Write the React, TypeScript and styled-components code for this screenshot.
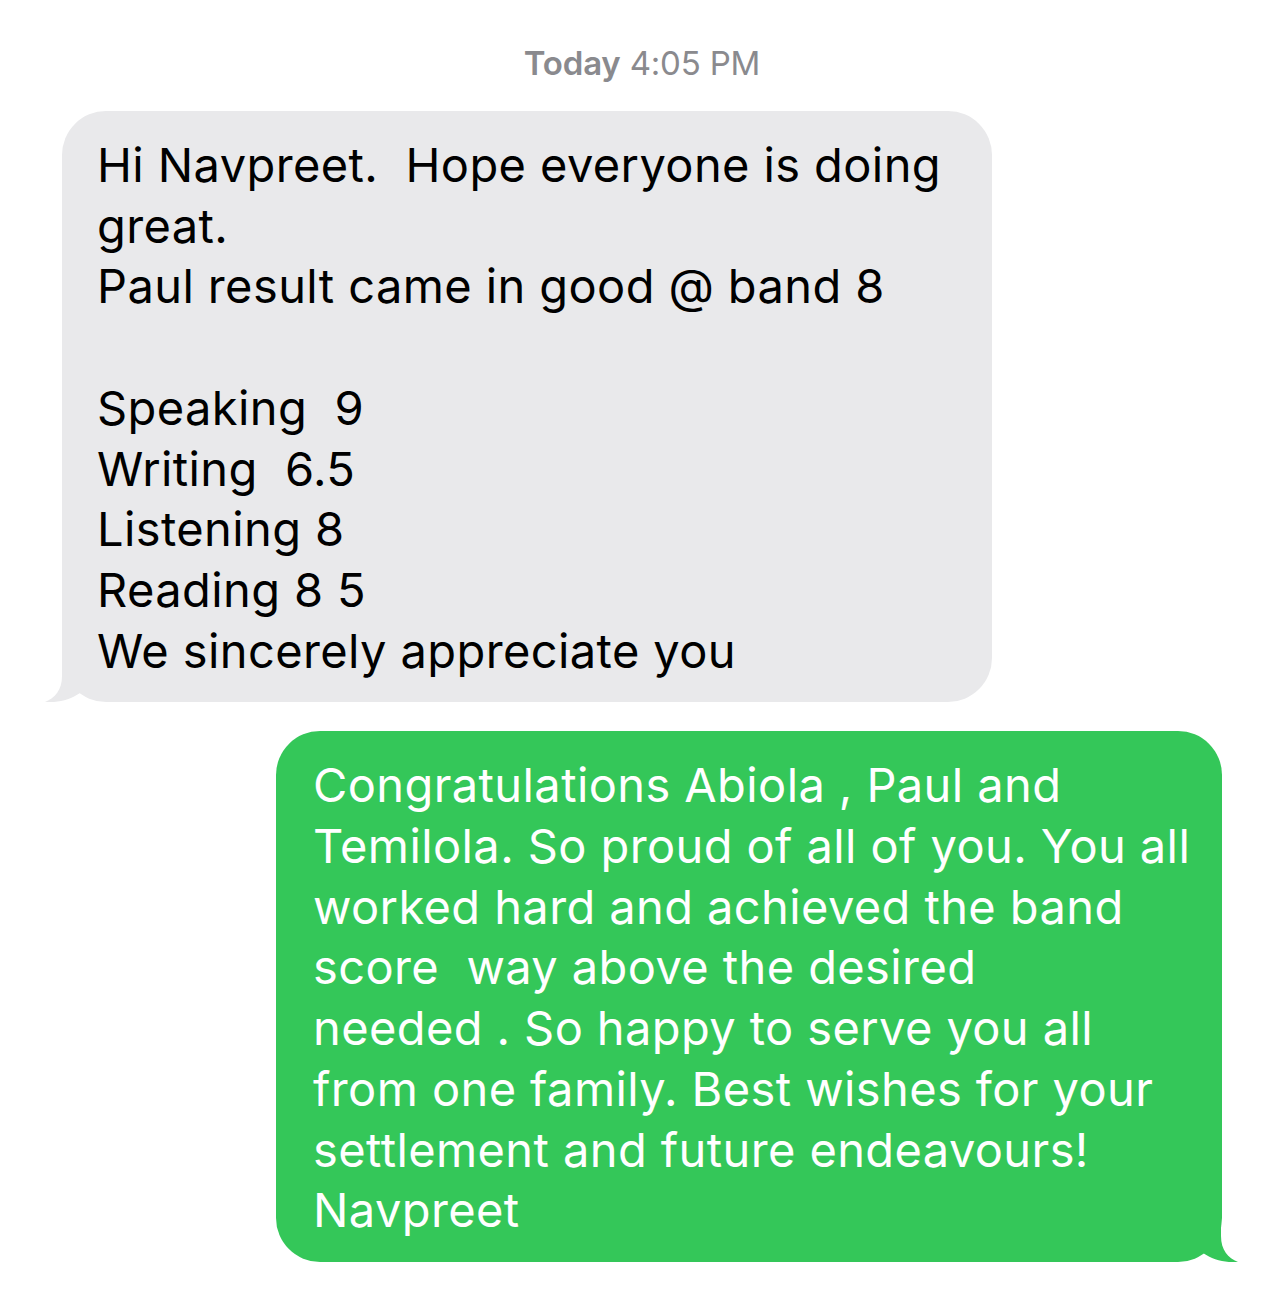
import React from "react";
import styled, { createGlobalStyle } from "styled-components";

const Global = createGlobalStyle`
  * { box-sizing: border-box; }
  html, body { margin: 0; padding: 0; background: #ffffff; }
  body { font-family: Inter, "Noto Sans", "Liberation Sans", sans-serif; }
`;

const Thread = styled.div`
  width: 1284px;
  min-height: 1289px;
  background: #ffffff;
  display: flex;
  flex-direction: column;
  padding: 41px 62px 0 62px;
`;

const Stamp = styled.div`
  align-self: center;
  font-size: 33px;
  line-height: 44px;
  color: #8a8a8e;
  letter-spacing: -0.2px;
  margin-bottom: 26px;
  b { font-weight: 600; }
`;

const Bubble = styled.div<{ $me?: boolean; $w: number }>`
  position: relative;
  width: ${(p) => p.$w}px;
  align-self: ${(p) => (p.$me ? "flex-end" : "flex-start")};
  background: ${(p) => (p.$me ? "#34c759" : "#e9e9eb")};
  color: ${(p) => (p.$me ? "#ffffff" : "#000000")};
  border-radius: 44px;
  padding: 24px 0 21px ${(p) => (p.$me ? 37 : 35)}px;
  font-size: 47px;
  line-height: 60.7px;
  letter-spacing: 0.4px;
  white-space: pre;
  margin-top: ${(p) => (p.$me ? 29 : 0)}px;
`;

const Tail = styled.svg<{ $me?: boolean }>`
  position: absolute;
  bottom: 0;
  width: 40px;
  height: 50px;
  ${(p) => (p.$me ? "right: -16px; transform: scaleX(-1);" : "left: -17px;")}
`;

const TailShape = ({ me, color }: { me?: boolean; color: string }) => (
  <Tail $me={me} viewBox="0 0 40 50">
    <path
      d="M17 0 L17 24 C17 38 10 46 0 50 C12 51 25 48 35 41 L35 0 Z"
      fill={color}
    />
  </Tail>
);

const them = `Hi Navpreet.  Hope everyone is doing
great.
Paul result came in good @ band 8

Speaking  9
Writing  6.5
Listening 8
Reading 8 5
We sincerely appreciate you`;

const mine = `Congratulations Abiola , Paul and
Temilola. So proud of all of you. You all
worked hard and achieved the band
score  way above the desired
needed . So happy to serve you all
from one family. Best wishes for your
settlement and future endeavours!
Navpreet`;

export default function App() {
  return (
    <>
      <Global />
      <Thread>
        <Stamp>
          <b>Today</b> 4:05 PM
        </Stamp>
        <Bubble $w={930}>
          {them}
          <TailShape color="#e9e9eb" />
        </Bubble>
        <Bubble $me $w={946}>
          {mine}
          <TailShape me color="#34c759" />
        </Bubble>
      </Thread>
    </>
  );
}
